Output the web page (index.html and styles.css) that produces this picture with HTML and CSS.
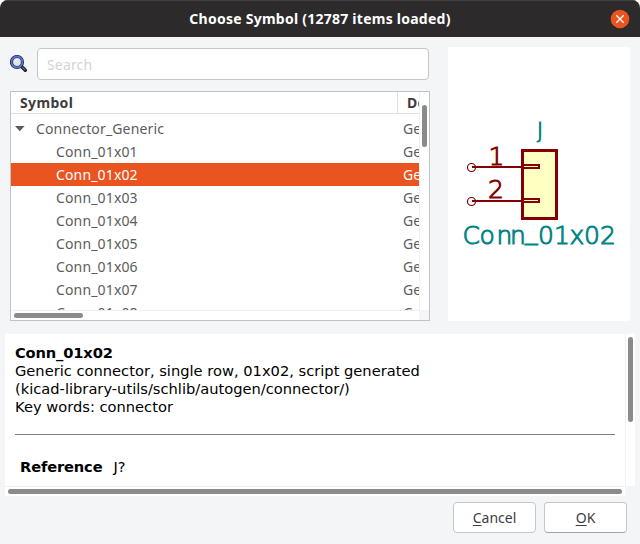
FILE: index.html
```html
<!DOCTYPE html>
<html lang="en">
<head>
<meta charset="utf-8">
<title>Choose Symbol</title>
<link rel="stylesheet" href="styles.css">
</head>
<body>
<div class="window">
  <header class="titlebar">
    <h1 class="title">Choose Symbol (12787 items loaded)</h1>
    <svg class="close" width="20" height="20" viewBox="0 0 20 20"><circle cx="10" cy="10" r="9.3"/><path d="M6.3 6.3l7.4 7.4M13.7 6.3l-7.4 7.4"/></svg>
  </header>
  <main class="upper">
    <section class="chooser">
      <div class="search-row">
        <svg class="lens" width="18" height="18" viewBox="0 0 18 18">
          <path d="M11 11l4.3 4.2" stroke="#24242c" stroke-width="3.6" stroke-linecap="round"/>
          <path d="M12.3 12.2l2.8 2.6" stroke="#77756c" stroke-width="1.1"/>
          <circle cx="7" cy="7" r="5.5" fill="#e3e3e3" stroke="#18245f" stroke-width="3.2"/>
          <circle cx="7" cy="7" r="5.5" fill="none" stroke="#5a76c8" stroke-width="1.8"/>
          <path d="M4.8 7a2.3 2.3 0 0 1 3-2.2" stroke="#fff" fill="none"/>
        </svg>
        <input class="search" placeholder="Search">
      </div>
      <div class="tree">
        <div class="view">
          <div class="head"><span class="col-name">Symbol</span><span class="col-desc">De</span></div>
          <div class="rows">
            <div class="row group"><svg class="arrow" width="10" height="6" viewBox="0 0 10 6"><path d="M0 0h9.6L4.8 5.2z"/></svg><span class="name">Connector_Generic</span><span class="desc">Ge</span></div>
            <div class="row"><span class="name">Conn_01x01</span><span class="desc">Ge</span></div>
            <div class="row selected"><span class="name">Conn_01x02</span><span class="desc">Ge</span></div>
            <div class="row"><span class="name">Conn_01x03</span><span class="desc">Ge</span></div>
            <div class="row"><span class="name">Conn_01x04</span><span class="desc">Ge</span></div>
            <div class="row"><span class="name">Conn_01x05</span><span class="desc">Ge</span></div>
            <div class="row"><span class="name">Conn_01x06</span><span class="desc">Ge</span></div>
            <div class="row"><span class="name">Conn_01x07</span><span class="desc">Ge</span></div>
            <div class="row"><span class="name">Conn_01x08</span><span class="desc">Ge</span></div>
          </div>
        </div>
        <div class="vbar"><i class="thumb"></i></div>
        <div class="hbar"><i class="thumb"></i></div>
        <div class="corner"></div>
      </div>
    </section>
    <svg class="preview" width="182" height="274" viewBox="448 47 182 274">
      <g shape-rendering="crispEdges">
        <rect x="522.5" y="150.500" width="34" height="68" fill="#ffffc2" stroke="#840000" stroke-width="3"/>
        <path d="M472 167h51M472 201h51" stroke="#840000" stroke-width="2"/>
        <path d="M524 165h15v3h-15M524 199h15v3h-15" fill="#ffffc2" stroke="#840000" stroke-width="2"/>
      </g>
      <g fill="none" stroke="#840000" stroke-width="1.2"><circle cx="471.5" cy="167.5" r="4"/><circle cx="471.5" cy="201.5" r="4"/></g>
      <g class="stroke-text pin"><text x="488.500" y="164.500">1</text><text x="488" y="197.500">2</text></g>
      <g class="stroke-text field"><text class="ref" x="537" y="138">J</text><text x="462.500 479.500 496.500 510 525 538 554 569.500 584 600" y="243.5 243.5 243.5 243.5 239 243.5 243.5 243.5 243.5 243.5">Conn_01x02</text></g>
    </svg>
  </main>
  <section class="details">
    <div class="doc">
      <b>Conn_01x02</b><br>Generic connector, single row, 01x02, script generated<br>(kicad-library-utils/schlib/autogen/connector/)<br>Key words: connector
      <hr class="rule">
      <div class="fields"><b>Reference</b><span>J?</span></div>
    </div>
    <div class="vbar"><i class="thumb"></i></div>
    <div class="hbar"><i class="thumb"></i></div>
  </section>
  <footer class="actions">
    <button class="button"><u>C</u>ancel</button>
    <button class="button default"><u>O</u>K</button>
  </footer>
</div>
</body>
</html>
```
FILE: styles.css
```css
* { box-sizing: border-box; }
body { margin: 0; background: #fff; font: 14px "Noto Sans", sans-serif; color: #5c5c5c; }
.window { width: 640px; height: 544px; background: #f4f5f7; border-radius: 8px 8px 0 0; overflow: hidden; }
.titlebar { height: 37px; background: #2c2a2a; border-top: 1px solid #414040; display: grid; grid-template-columns: 1fr 20px; align-items: center; padding: 0 10px; }
.title { margin: 0 -20px 0 0; text-align: center; font-size: 14px; line-height: 20px; font-weight: 700; color: #fff; letter-spacing: 0.25px; }
.close circle { fill: #e95420; }
.close path { stroke: #fff; stroke-width: 1.3; }
.upper { display: flex; gap: 18px; padding: 10px 10px 0; height: 284px; }
.chooser { width: 420px; padding-top: 1px; }
.search-row { display: flex; align-items: center; padding-right: 1px; height: 32px; }
.lens { margin-right: 9px; fill: none; }
.search { flex: 1; height: 32px; border: 1px solid #c3c7cc; border-radius: 4px; background: #fff; padding: 0 9px; font: 14px "Noto Sans", sans-serif; letter-spacing: 0.15px; outline: 0; }
.search::placeholder { color: #d4d4d4; opacity: 1; }
.tree { margin-top: 11px; height: 230px; border: 1px solid #bfc3c9; background: #fff; display: grid; grid-template-columns: 408px 10px; grid-template-rows: 218px 10px; }
.view { overflow: hidden; }
.head { display: flex; height: 22px; line-height: 22px; border-bottom: 1px solid #dfe0e1; font-weight: 700; color: #3d3d3d; letter-spacing: 0.35px; }
.col-name { flex: 0 0 387px; padding-left: 9px; border-right: 1px solid #dfe0e1; }
.col-desc { padding-left: 9px; }
.rows { padding-top: 3px; letter-spacing: 0.15px; }
.row { display: flex; align-items: center; height: 23px; padding-left: 45px; white-space: nowrap; }
.name { flex: 0 0 347px; }
.group { padding-left: 4px; }
.group .name { flex-basis: 367px; }
.arrow { flex: none; margin-right: 11px; fill: #5c5c5c; }
.selected { background: #e95420; color: #fff; }
.thumb { display: block; background: #8b8b8b; border-radius: 3px; }
.vbar { background: #fff; border-left: 1px solid #f0f1f2; }
.hbar { background: #fff; border-top: 1px solid #f0f1f2; }
.corner { background: #f4f5f7; }
.tree .vbar { padding: 13px 0 0 2px; }
.tree .vbar .thumb { width: 5px; height: 42px; }
.tree .hbar { padding: 2px 0 0 3px; }
.tree .hbar .thumb { width: 69px; height: 5px; }
.preview { background: #fff; flex: none; }
.stroke-text { font: 200 25px "DejaVu Sans", sans-serif; stroke-width: 1; }
.pin { fill: #840000; stroke: #840000; }
.field { fill: #008484; stroke: #008484; }
.ref { font-size: 20.5px; }
.details { margin: 13px 5px 0; display: grid; grid-template-columns: 620px 10px; grid-template-rows: 152px 10px; }
.doc { background: #fff; padding: 10px; color: #000; font: 14.67px/18px "DejaVu Sans", sans-serif; }
.doc b { letter-spacing: -0.15px; }
.rule { margin: 18px 0 0; height: 1px; border: 0; background: #808080; }
.fields { display: flex; gap: 11px; padding: 23px 5px 0; }
.details .vbar { padding: 3px 0 0 2px; }
.details .vbar .thumb { width: 5px; height: 85px; }
.details .hbar { padding: 2px 3px 0; }
.details .hbar .thumb { height: 5px; }
.actions { display: flex; justify-content: flex-end; gap: 8px; padding: 6px 13px 0; }
.button { width: 83px; height: 31px; padding: 0; border: 1px solid #c3c7cc; border-radius: 4px; background: #fff; color: #3d3d3d; font: 14px "Noto Sans", sans-serif; }
.default { border-bottom-color: #9aa8b3; }
.button u { text-underline-offset: 2px; text-decoration-skip-ink: none; }
```
